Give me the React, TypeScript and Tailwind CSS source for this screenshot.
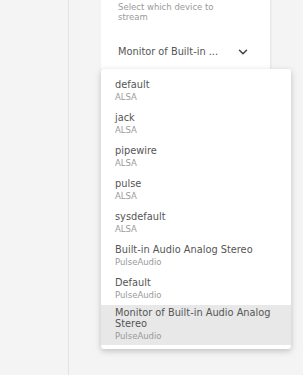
import React from "react";
import { ChevronDown } from "lucide-react";

const devices = [
  { name: "default", api: "ALSA" },
  { name: "jack", api: "ALSA" },
  { name: "pipewire", api: "ALSA" },
  { name: "pulse", api: "ALSA" },
  { name: "sysdefault", api: "ALSA" },
  { name: "Built-in Audio Analog Stereo", api: "PulseAudio" },
  { name: "Default", api: "PulseAudio" },
  { name: "Monitor of Built-in Audio Analog Stereo", api: "PulseAudio", selected: true },
];

export default function App() {
  return (
    <div
      className="relative flex h-[375px] w-[303px] overflow-hidden bg-[#f4f4f4]"
      style={{ fontFamily: '"DejaVu Sans", sans-serif' }}
    >
      {/* left rail */}
      <div className="h-full w-[69px] shrink-0 border-r border-[#e3e3e3] bg-[#f4f4f4]" />

      {/* content */}
      <div className="flex-1 pl-[32px]">
        <div className="h-[69px] w-[169px] bg-white pl-[17px] pr-[16px] pt-[3px] shadow-[1px_0_2px_rgba(0,0,0,0.08)]">
          <p className="w-[120px] text-[8.5px] leading-[9.5px] text-[#9a9a9a]">
            Select which device to stream
          </p>
          <button className="mt-[23px] flex w-full items-center justify-between text-[9.8px] text-[#555]">
            <span>Monitor of Built-in ...</span>
            <ChevronDown className="mr-[4px] h-[14px] w-[14px] text-[#444]" strokeWidth={2.6} />
          </button>
        </div>
      </div>

      {/* dropdown popover */}
      <ul className="absolute left-[101px] top-[69px] w-[190px] rounded-[3px] bg-white pt-[5px] pb-[4px] shadow-[0_2px_6px_rgba(0,0,0,0.22)]">
        {devices.map((d) => (
          <li
            key={d.name}
            className={
              d.selected
                ? "bg-[#e8e8e8] pl-[14px] pr-[8px] pt-[2px] pb-[3px]"
                : "pl-[14px] pr-[8px] pt-[5px] pb-[4px]"
            }
          >
            <div className="text-[9.8px] leading-[11px] text-[#555]">{d.name}</div>
            <div className="mt-[1px] text-[8.5px] leading-[12px] text-[#9a9a9a]">{d.api}</div>
          </li>
        ))}
      </ul>
    </div>
  );
}
